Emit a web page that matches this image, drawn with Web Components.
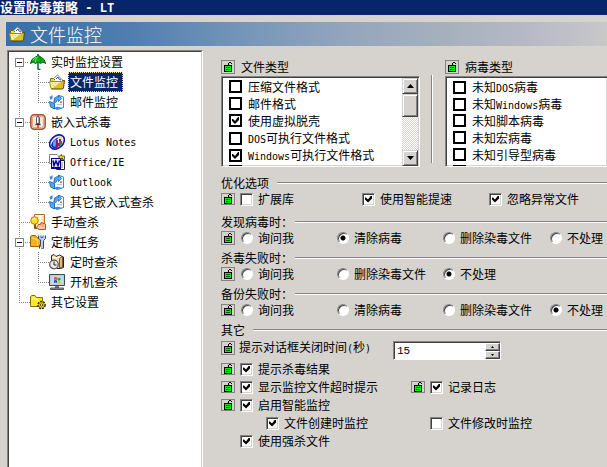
<!DOCTYPE html>
<html lang="zh-CN">
<head>
<meta charset="utf-8">
<title>设置防毒策略 - LT</title>
<style>
  html, body { height: 100%; }
  body {
    --face: #d6d3ce;
    --shadow: #848284;
    --dark: #424142;
    --navy: #08246b;
    margin: 0;
    display: flex;
    flex-direction: column;
    overflow: hidden;
    background: var(--face);
    color: #000;
    font: 12px/16px "Noto Sans CJK SC", sans-serif;
  }
  /* Latin runs take half the width of a Chinese character */
  .en { font-family: "DejaVu Sans Mono", monospace; font-size: 10px; }
  title-bar .en { font-size: 12px; white-space: pre; }
  main { flex: 1; min-height: 0; display: flex; padding: 4px 0 0 7px; }
  .form { flex: 1; min-width: 0; padding: 10px 0 0 18px; }
  .types { display: flex; margin-bottom: 8px; }
  .types type-list:first-child { flex: 0 0 199px; }
  .types type-list:last-child { flex: 1; min-width: 0; }
  .divider {
    flex: none;
    width: 1px;
    margin: 15px 12px 4px 11px;
    background: var(--shadow);
    border-right: 1px solid #fff;
  }
  .row { display: flex; align-items: center; height: 16px; }
  .row lock-button { margin-right: 5px; }
  .thirds { flex: 1; display: grid; grid-template-columns: 122fr 127fr 118fr; }
  .halves { display: grid; grid-template-columns: 190fr 196fr; }
  .halves .row { height: 18px; }
  .halves .pad { padding-left: 19px; }
  .halves .indent { padding-left: 45px; }
</style>
</head>
<body>

<title-bar>设置防毒策略<span class="en"> - LT</span></title-bar>
<page-banner icon="folder">文件监控</page-banner>

<main>
  <tree-view>
    <tree-item icon="umbrella" guides="down" toggle>实时监控设置</tree-item>
    <tree-item icon="folder" guides="pass tee" selected>文件监控</tree-item>
    <tree-item icon="mail" guides="pass end">邮件监控</tree-item>
    <tree-item icon="knife" guides="tee" toggle>嵌入式杀毒</tree-item>
    <tree-item icon="lotus" guides="pass tee"><span class="en">Lotus Notes</span></tree-item>
    <tree-item icon="word" guides="pass tee"><span class="en">Office/IE</span></tree-item>
    <tree-item icon="mail" guides="pass tee"><span class="en">Outlook</span></tree-item>
    <tree-item icon="mail" guides="pass end">其它嵌入式查杀</tree-item>
    <tree-item icon="search" guides="tee">手动查杀</tree-item>
    <tree-item icon="wrench" guides="tee" toggle>定制任务</tree-item>
    <tree-item icon="clock" guides="pass tee">定时查杀</tree-item>
    <tree-item icon="computer" guides="pass end">开机查杀</tree-item>
    <tree-item icon="gear" guides="end">其它设置</tree-item>
  </tree-view>

  <div class="form">
    <div class="types">
      <type-list caption="文件类型" scrollbar>
        <check-box flat>压缩文件格式</check-box>
        <check-box flat>邮件格式</check-box>
        <check-box flat checked>使用虚拟脱壳</check-box>
        <check-box flat><span class="en">DOS</span>可执行文件格式</check-box>
        <check-box flat checked><span class="en">Windows</span>可执行文件格式</check-box>
        <check-box flat>文本脚本文件格式</check-box>
      </type-list>
      <div class="divider"></div>
      <type-list caption="病毒类型" open-end>
        <check-box flat>未知<span class="en">DOS</span>病毒</check-box>
        <check-box flat>未知<span class="en">Windows</span>病毒</check-box>
        <check-box flat>未知脚本病毒</check-box>
        <check-box flat>未知宏病毒</check-box>
        <check-box flat>未知引导型病毒</check-box>
        <check-box flat>未知木马病毒</check-box>
      </type-list>
    </div>

    <form-section caption="优化选项" style="--after: 7px">
      <div class="row">
        <lock-button short></lock-button>
        <div class="thirds">
          <check-box>扩展库</check-box>
          <check-box checked>使用智能提速</check-box>
          <check-box checked>忽略异常文件</check-box>
        </div>
      </div>
    </form-section>

    <form-section caption="发现病毒时：">
      <div class="row">
        <lock-button></lock-button>
        <radio-group label="发现病毒时" options="询问我,清除病毒,删除染毒文件,不处理" value="清除病毒"></radio-group>
      </div>
    </form-section>

    <form-section caption="杀毒失败时：">
      <div class="row">
        <lock-button></lock-button>
        <radio-group label="杀毒失败时" options="询问我,删除染毒文件,不处理" value="不处理"></radio-group>
      </div>
    </form-section>

    <form-section caption="备份失败时：">
      <div class="row">
        <lock-button short></lock-button>
        <radio-group label="备份失败时" options="询问我,清除病毒,删除染毒文件,不处理" value="不处理"></radio-group>
      </div>
    </form-section>

    <form-section caption="其它">
      <spin-field value="15"><lock-button slot="lock"></lock-button>提示对话框关闭时间<span class="en">(</span>秒<span class="en">)</span></spin-field>
      <div class="halves">
        <div class="row"><lock-button short></lock-button><check-box checked>提示杀毒结果</check-box></div>
        <div></div>
        <div class="row"><lock-button short></lock-button><check-box checked>显示监控文件超时提示</check-box></div>
        <div class="row"><lock-button short></lock-button><check-box checked>记录日志</check-box></div>
        <div class="row"><lock-button short></lock-button><check-box checked>启用智能监控</check-box></div>
        <div></div>
        <div class="row indent"><check-box checked>文件创建时监控</check-box></div>
        <div class="row pad"><check-box>文件修改时监控</check-box></div>
        <div class="row pad"><check-box checked>使用强杀文件</check-box></div>
      </div>
    </form-section>
  </div>
</main>

<script>
const ICONS = {
  umbrella: `
    <path d="M8 0v2M8 9v5.500M8 14.500q0 1 1.500 1h1" stroke="#063" stroke-width="1.500" fill="none"/>
    <path d="M.5 9.500Q1 5 4.500 3.500T8 1.500T11.500 3.500Q15 5 15.500 9.500L13 8L10.500 9.500L8 8L5.500 9.500L3 8Z" fill="#10b018" stroke="#055a10"/>
    <path d="M7.500 2.500Q5 5 5.500 8M3 6q1-2 3-3" stroke="#6cf06c" fill="none"/>
    <path d="M9 3q2.500 2 2 5" stroke="#078010" fill="none"/>`,
  folder: `
    <path d="M3 6L8.500 1L14 6.500V9H3Z" fill="#fff" stroke="#848284"/>
    <path d="M7 5l2-2 1 2 2 1" stroke="#2850b0" fill="none"/>
    <path d="M1.500 13V4.500H4.500L6 6" fill="#e8d848" stroke="#807000"/>
    <path d="M.5 7.500H12.500L13.500 14.500H2Z" fill="#fff0a0" stroke="#a09000"/>
    <path d="M13 7L15.500 6.500L14.500 14L13.500 15H2.500" fill="#d8c020" stroke="#504800"/>
    <path d="M3 9.500h1m2 0h1m2 0h1M4 11.500h1m2 0h1m2 0h1M5 13h1m2 0h1m2 0h1" stroke="#f0c850"/>`,
  mail: `
    <path d="M5.500 4L10 1.500L14.500 3V13.500L8 15.500L4.500 13Z" fill="#f4faff" stroke="#2878d0"/>
    <path d="M.5 7.500L5.500 9.500V15L1.500 13Z" fill="#50a8f0" stroke="#2070c8"/>
    <path d="M5.500 13.500Q9 12 12 13.500L8 15.500Z" fill="#3890e8"/>
    <path d="M5 8Q5.500 3.500 9.500 3.500V1L12.500 4.500L9.500 7.500V5.500Q7.500 5.500 7 8.500Z" fill="#58b0f8" stroke="#1858b0" stroke-width=".7"/>
    <path d="M11 7.500h2v1.500h-2z" fill="#e06820"/>
    <path d="M8 10.500h5" stroke="#a8c8e8"/>
    <path d="M.5 3L3.500 1V4.500L1.500 6Z" fill="#3888e0"/>
    <path d="M14.500 3V13.500" stroke="#708090"/>`,
  knife: `
    <rect x=".8" y=".8" width="14.400" height="14.400" rx="3.500" fill="#f4d8bc" stroke="#a85030" stroke-width="1.500"/>
    <rect x="2.500" y="2.500" width="11" height="11" rx="2" fill="#f8e8d8" stroke="#e0a880"/>
    <path d="M6.500 9.500V4L8 1.500L9.500 4V9.500Z" fill="#fff" stroke="#505860"/>
    <path d="M8.500 3v6" stroke="#a0a8b0"/>
    <path d="M5.500 10.500h5" stroke="#303030" stroke-width="1.300"/>
    <path d="M8 11v3" stroke="#e04020" stroke-width="1.500"/>`,
  lotus: `
    <ellipse cx="8" cy="8" rx="8.300" ry="6" transform="rotate(-42 8 8)" fill="#f8e8f8" stroke="#1018b0" stroke-width="1.600"/>
    <path d="M2 11Q4 5 10 3L6 8L7 14Q3 15 2 11Z" fill="#1828e0"/>
    <path d="M4 8l3-3 1 3-1 5-3-1z" fill="#30c0d0"/>
    <path d="M7 6h2v3h1V5h2v4l-2 3-2 2H6l1-4z" fill="#a01068"/>
    <path d="M10 7h3v3l-3 3z" fill="#188848"/>
    <path d="M9 3l3-1 1 2-2 1z" fill="#f0e030"/>`,
  word: `
    <path d="M.5 .5H8L10.500 3V9.500H.5Z" fill="#fff" stroke="#848284"/>
    <path d="M7.500 6.500H15.500V15.500H7.500Z" fill="#fff" stroke="#222"/>
    <path d="M9 9h5M9 11h5M9 13h5" stroke="#888"/>
    <rect x="2.500" y="4.500" width="9" height="9" fill="#dde4ff" stroke="#000080"/>
    <path d="M4 6.500L5 11.500L7 7L9 11.500L10.500 6.500" stroke="#000080" stroke-width="1.500" fill="none"/>
    <path d="M2 14.500h10" stroke="#000080"/>
    <path d="M9.500 3L12.500 .5V2H15.500V5.500H13.500V4H12.500V5.500Z" fill="#ffe800" stroke="#222" stroke-width=".7"/>`,
  search: `
    <path d="M4.500 .5H14.500V14.500H4.500Z" fill="#fff8e8" stroke="#a87020"/>
    <path d="M13 2v11" stroke="#e8c080"/>
    <path d="M5 10V14.500" stroke="#805010" stroke-width="2"/>
    <circle cx="4.500" cy="6.500" r="3.800" fill="#ffdc30" stroke="#c07800"/>
    <path d="M2.500 6q1-2 3-1.500" stroke="#fffbd0" fill="none"/>
    <path d="M6.500 13.500L9 10L10 11L11 8.500L15.500 10V15.500H9Z" fill="#ffc8a0" stroke="#a05828"/>
    <path d="M11 9v3M13 10v3" stroke="#d88858"/>`,
  wrench: `
    <path d="M.5 12.500V2.500L2 1.500H5.500L7 3.500L10.500 5.500V12.500Z" fill="#f8b020" stroke="#a06000"/>
    <path d="M2 4L7.500 5.500V11.500" stroke="#ffe078" fill="none"/>
    <path d="M8.500 1.500V4L10.500 6V10L9.500 12V14.500M15.500 1.500V4.500L13.500 6.500V14.500H11.500V12" fill="none" stroke="#204888"/>
    <path d="M10 1.500V4L12 5.500L14 4V1.500M12 5.500V14.500" fill="none" stroke="#b0d0f4" stroke-width="1.800"/>
    <path d="M11 1.500V3.500H13V1.500" fill="none" stroke="#204888" stroke-width=".8"/>`,
  clock: `
    <path d="M2.500 6V1.500L5 .5L7 2.500L10.500 1L14.500 3V13.500L11.500 14.500H8Z" fill="#f8e0b0" stroke="#222"/>
    <path d="M10.500 14V4.500L13.500 2.500V13Z" fill="#e8b878" stroke="#604020" stroke-width=".8"/>
    <path d="M4 3l2 1 4-1" stroke="#fff" fill="none"/>
    <circle cx="5" cy="10.500" r="4.300" fill="#e8e8e8" stroke="#505458" stroke-width="1.200"/>
    <path d="M5 7.500v3.500h2.500" stroke="#222" fill="none"/>`,
  computer: `
    <path d="M.5 .5H15.500V11.500H.5Z" fill="#c8ccd0" stroke="#404850"/>
    <path d="M2 2H14V10H2Z" fill="#b8dcf8"/>
    <path d="M5 3.500q1.500-1 3 0v2.500q-1.500-1-3 0z" fill="#e05820"/>
    <path d="M8.500 3.500q1.500 1 3 0v2.500q-1.500 1-3 0z" fill="#30a030"/>
    <path d="M5 6.500q1.500-1 3 0v2.500q-1.500-1-3 0z" fill="#2050c8"/>
    <path d="M8.500 6.500q1.500 1 3 0v2.500q-1.500 1-3 0z" fill="#f0c010"/>
    <path d="M6 12h4v2H6z" fill="#707880"/>
    <path d="M1.500 14H14.500V15.500H1.500Z" fill="#a8acb0" stroke="#303438" stroke-width=".8"/>`,
  gear: `
    <path d="M.5 12.500V2.500L2 1.500H5L6.500 3.500H12.500V12.500Z" fill="#ffe820" stroke="#807000"/>
    <path d="M2 4.500L8 5.500L8 11" stroke="#fffbb0" fill="none"/>
    <circle cx="11.500" cy="11" r="3.600" fill="#ffd800" stroke="#302800" stroke-width="1.500" stroke-dasharray="2 1"/>
    <circle cx="11.500" cy="11" r="2.700" fill="#ffe820" stroke="#705800" stroke-width=".6"/>
    <circle cx="11.500" cy="11" r="1.200" fill="#fff" stroke="#302800" stroke-width=".8"/>`
};

function iconSvg(name) {
  return `<svg class="icon" width="16" height="16" viewBox="0 0 16 16" aria-hidden="true">${ICONS[name]}</svg>`;
}

class TitleBar extends HTMLElement {
  constructor() {
    super();
    this.attachShadow({ mode: 'open' }).innerHTML = `
      <style>
        :host {
          display: block;
          height: 15px;
          background: var(--navy);
          color: #fff;
          font-size: 13px;
          font-weight: bold;
          line-height: 13px;
          white-space: nowrap;
        }
      </style>
      <slot></slot>`;
  }
}
customElements.define('title-bar', TitleBar);

class PageBanner extends HTMLElement {
  connectedCallback() {
    this.attachShadow({ mode: 'open' }).innerHTML = `
      <style>
        :host {
          display: flex;
          align-items: center;
          gap: 5px;
          height: 24px;
          margin: 7px 0 0 6px;
          padding-left: 3px;
          background: linear-gradient(90deg, #396fa8, #4f7db0 20%, #7294b8 38%, #93a5bd 56%, #a7b1bc 74%, #b8bac6 88%, #c8c8c8);
        }
        h1 { margin: 0; color: #fff; font-size: 18px; font-weight: 300; line-height: 24px; }
      </style>
      ${iconSvg(this.getAttribute('icon'))}<h1><slot></slot></h1>`;
  }
}
customElements.define('page-banner', PageBanner);

class TreeView extends HTMLElement {
  constructor() {
    super();
    this.attachShadow({ mode: 'open' }).innerHTML = `
      <style>
        :host {
          display: block;
          flex: 0 0 194px;
          background: #fff;
          border: 1px solid var(--shadow);
          border-width: 1px 1px 0 1px;
          border-right-color: #fff;
        }
        div {
          height: 100%;
          box-sizing: border-box;
          border: 1px solid var(--dark);
          border-width: 1px 1px 0 1px;
          border-right-color: var(--face);
        }
      </style>
      <div role="tree"><slot></slot></div>`;
  }
}
customElements.define('tree-view', TreeView);

/**
 * TreeItem - one line of the tree.
 *
 * @attribute {string} icon - Key in ICONS.
 * @attribute {string} guides - One word for each level: pass, tee, end or down.
 * @attribute {boolean} [toggle] - Puts the expand button on the last guide.
 * @attribute {boolean} [selected]
 */
class TreeItem extends HTMLElement {
  connectedCallback() {
    const toggle = this.hasAttribute('toggle') ? '<button aria-label="折叠"></button>' : '';
    const guides = this.getAttribute('guides').split(' ');
    this.setAttribute('role', 'treeitem');
    this.attachShadow({ mode: 'open' }).innerHTML = `
      <style>
        :host { display: flex; align-items: center; height: 20px; white-space: nowrap; }
        .guide {
          --x: 10px;
          --v: repeating-linear-gradient(var(--shadow) 0 1px, transparent 1px 2px);
          --h: repeating-linear-gradient(90deg, var(--shadow) 0 1px, transparent 1px 2px);
          display: flex;
          align-items: center;
          box-sizing: border-box;
          width: 21px;
          height: 20px;
          padding-left: 6px;
          background-repeat: no-repeat;
        }
        .guide + .guide { --x: 8px; width: 19px; }
        .pass { background-image: var(--v); background-size: 1px 100%; background-position: var(--x) 0; }
        .down { background-image: var(--v), var(--h); background-size: 1px 10px, 10px 1px; background-position: var(--x) 10px, 10px 10px; }
        .tee { background-image: var(--v), var(--h); background-size: 1px 100%, 11px 1px; background-position: var(--x) 0, var(--x) 10px; }
        .end { background-image: var(--v), var(--h); background-size: 1px 10px, 11px 1px; background-position: var(--x) 0, var(--x) 10px; }
        button {
          width: 9px;
          height: 9px;
          margin: 1px 0 0;
          padding: 0;
          border: 1px solid var(--shadow);
          background: linear-gradient(#000, #000) center / 5px 1px no-repeat #fff;
        }
        .label { margin-left: 3px; padding: 1px 4px 1px 1px; border: 1px solid transparent; line-height: 16px; }
        :host([selected]) .label { background: var(--navy); color: #fff; border: 1px dotted #f8d890; }
      </style>
      ${guides.map((g, i) => `<span class="guide ${g}">${i === guides.length - 1 ? toggle : ''}</span>`).join('')}
      ${iconSvg(this.getAttribute('icon'))}
      <span class="label"><slot></slot></span>`;
  }
}
customElements.define('tree-item', TreeItem);

class LockButton extends HTMLElement {
  constructor() {
    super();
    this.attachShadow({ mode: 'open' }).innerHTML = `
      <style>
        :host { display: block; flex: none; }
        button {
          display: flex;
          align-items: center;
          justify-content: center;
          box-sizing: border-box;
          width: 14px;
          height: 14px;
          padding: 0;
          border: 1px solid var(--shadow);
          background: var(--face);
          overflow: hidden;
        }
        :host([short]) button { height: 12px; }
      </style>
      <button aria-label="解锁">
        <svg width="10" height="10" viewBox="0 0 10 10" shape-rendering="crispEdges">
          <path d="M5 3V1H6V0H8V1H9V2H8V1H6V3Z" fill="#000"/>
          <path d="M1 3H9V10H1Z" fill="#000"/>
          <path d="M2 4H8V9H2Z" fill="#00f010"/>
          <path d="M3 5H7V6H3ZM3 7H7V8H3Z" fill="#006008"/>
        </svg>
      </button>`;
  }
}
customElements.define('lock-button', LockButton);

class CheckBox extends HTMLElement {
  connectedCallback() {
    this.attachShadow({ mode: 'open' }).innerHTML = `
      <style>
        :host { display: block; white-space: nowrap; }
        label { display: flex; align-items: center; gap: 5px; line-height: 16px; }
        input {
          appearance: none;
          flex: none;
          display: grid;
          place-content: center;
          box-sizing: border-box;
          width: 13px;
          height: 13px;
          margin: 0;
          background: #fff;
          border: 1px solid;
          border-color: var(--shadow) #fff #fff var(--shadow);
          box-shadow: inset 1px 1px var(--dark), inset -1px -1px var(--face);
        }
        input:checked::before {
          content: "";
          width: 7px;
          height: 7px;
          background: #000;
          clip-path: polygon(0 2px, 1px 2px, 3px 4px, 6px 0, 7px 0, 7px 3px, 3px 7px, 0 4px);
        }
        :host([flat]) { height: 17px; }
        :host([flat]) label { gap: 6px; line-height: 17px; }
        :host([flat]) input { border: 2px solid #000; box-shadow: none; }
      </style>
      <label><input type="checkbox" ${this.hasAttribute('checked') ? 'checked' : ''}><span><slot></slot></span></label>`;
  }
}
customElements.define('check-box', CheckBox);

class RadioGroup extends HTMLElement {
  connectedCallback() {
    const value = this.getAttribute('value');
    const options = this.getAttribute('options').split(',');
    this.setAttribute('role', 'radiogroup');
    this.setAttribute('aria-label', this.getAttribute('label'));
    this.attachShadow({ mode: 'open' }).innerHTML = `
      <style>
        :host { flex: 1; display: grid; grid-template-columns: 96fr 106fr 107fr 58fr; white-space: nowrap; }
        label { display: flex; align-items: center; gap: 5px; min-width: 0; line-height: 16px; }
        input {
          appearance: none;
          flex: none;
          box-sizing: border-box;
          width: 12px;
          height: 12px;
          margin: 0 0 0 1px;
          border: 1px solid;
          border-color: var(--shadow) #fff #fff var(--shadow);
          border-radius: 50%;
          background: #fff;
          box-shadow: inset 1px 1px var(--dark);
        }
        input:checked { background: radial-gradient(circle, #000 2px, #fff 3px); }
      </style>
      ${options.map(o => `<label><input type="radio" name="action" ${o === value ? 'checked' : ''}>${o}</label>`).join('')}`;
  }
}
customElements.define('radio-group', RadioGroup);

class SpinField extends HTMLElement {
  connectedCallback() {
    this.attachShadow({ mode: 'open' }).innerHTML = `
      <style>
        :host { display: grid; grid-template-columns: 172fr 214fr; align-items: start; padding-top: 3px; }
        .caption { display: flex; align-items: center; gap: 4px; height: 14px; white-space: nowrap; }
        .field {
          display: flex;
          box-sizing: border-box;
          width: 108px;
          height: 19px;
          background: #fff;
          border: 1px solid;
          border-color: var(--shadow) #fff #fff var(--shadow);
          box-shadow: inset 1px 1px var(--dark);
        }
        input {
          flex: 1;
          min-width: 0;
          padding: 1px 0 0 3px;
          border: 0;
          outline: 0;
          background: none;
          font: 11px/16px "Liberation Mono", monospace;
        }
        .arrows { flex: none; display: flex; flex-direction: column; width: 15px; padding-top: 1px; }
        button {
          flex: 1;
          display: grid;
          place-content: center;
          padding: 0;
          background: var(--face);
          border: 1px solid;
          border-color: #fff var(--dark) var(--dark) #fff;
          box-shadow: inset -1px -1px var(--shadow);
        }
        svg { display: block; }
      </style>
      <div class="caption"><slot name="lock"></slot><label for="n"><slot></slot></label></div>
      <div class="field">
        <input id="n" type="text" value="${this.getAttribute('value')}">
        <div class="arrows">
          <button aria-label="增加"><svg width="3" height="2"><path d="M0 2L1.500 0L3 2Z"/></svg></button>
          <button aria-label="减少"><svg width="3" height="2"><path d="M0 0H3L1.500 2Z"/></svg></button>
        </div>
      </div>`;
  }
}
customElements.define('spin-field', SpinField);

class FormSection extends HTMLElement {
  connectedCallback() {
    const caption = this.getAttribute('caption');
    // a full-width colon already leaves blank space after it
    const gap = caption.endsWith('：') ? 2 : 8;
    this.attachShadow({ mode: 'open' }).innerHTML = `
      <style>
        :host { display: block; margin-bottom: var(--after, 4px); }
        header { display: flex; align-items: center; gap: ${gap}px; height: 16px; }
        h2 { margin: 0; font-size: 12px; font-weight: normal; line-height: 16px; }
        hr { flex: 1; height: 1px; margin: 0; border: 0; border-bottom: 1px solid #fff; background: var(--shadow); }
      </style>
      <header><h2>${caption}</h2><hr></header>
      <slot></slot>`;
  }
}
customElements.define('form-section', FormSection);

class TypeList extends HTMLElement {
  connectedCallback() {
    const bar = `
      <div class="bar">
        <button aria-label="向上"><svg width="7" height="4"><path d="M0 4L3.500 0L7 4Z"/></svg></button>
        <div class="thumb"></div>
        <div class="track"></div>
        <button aria-label="向下"><svg width="7" height="4"><path d="M0 0H7L3.500 4Z"/></svg></button>
      </div>`;
    this.attachShadow({ mode: 'open' }).innerHTML = `
      <style>
        :host { display: block; }
        header { display: flex; align-items: center; gap: 6px; height: 14px; margin-bottom: 2px; }
        h2 { margin: 0; font-size: 12px; font-weight: normal; line-height: 14px; }
        .box {
          display: flex;
          box-sizing: border-box;
          height: 91px;
          padding: 1px 1px 0 1px;
          overflow: hidden;
          background: #fff;
          border: 1px solid;
          border-color: var(--shadow) #fff #fff var(--shadow);
          box-shadow: inset 1px 1px var(--dark), inset -1px -1px var(--face);
        }
        :host([open-end]) .box { border-right: 0; }
        .items { flex: 1; min-width: 0; padding-left: 6px; overflow: hidden; }
        .bar { flex: none; display: flex; flex-direction: column; width: 16px; }
        button, .thumb {
          flex: none;
          display: grid;
          place-content: center;
          box-sizing: border-box;
          height: 16px;
          padding: 0;
          background: var(--face);
          border: 1px solid;
          border-color: var(--face) var(--dark) var(--dark) var(--face);
          box-shadow: inset 1px 1px #fff, inset -1px -1px var(--shadow);
        }
        .thumb { height: 23px; }
        .track { flex: 1; background: repeating-conic-gradient(#fff 0 25%, var(--face) 0 50%) 0 0 / 2px 2px; }
      </style>
      <header><lock-button></lock-button><h2>${this.getAttribute('caption')}</h2></header>
      <div class="box">
        <div class="items"><slot></slot></div>
        ${this.hasAttribute('scrollbar') ? bar : ''}
      </div>`;
  }
}
customElements.define('type-list', TypeList);
</script>
</body>
</html>
